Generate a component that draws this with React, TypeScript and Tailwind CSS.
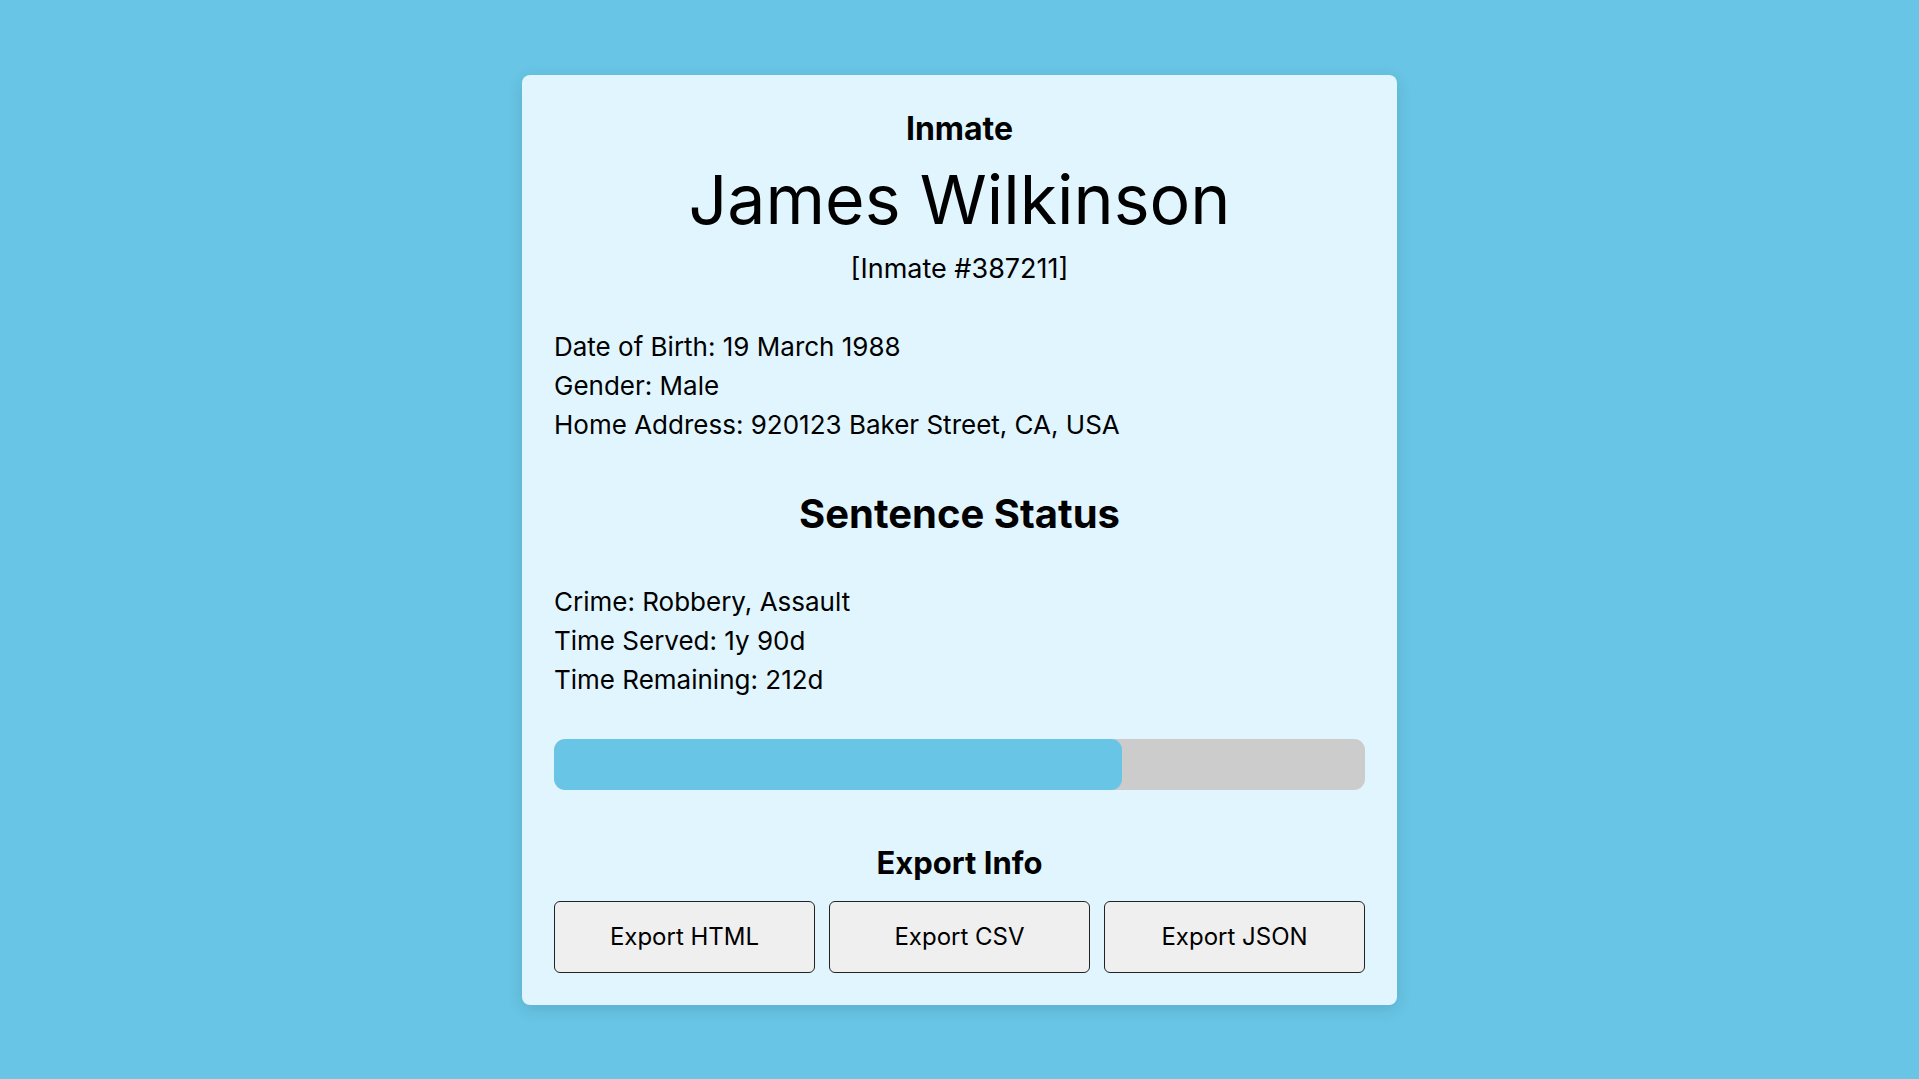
export default function App() {
  const served = 70;

  return (
    <div className="min-h-screen bg-[#68c5e5] flex justify-center pt-[75px] font-['Inter','Liberation_Sans',sans-serif] text-black">
      <div className="w-[875px] h-[930px] bg-[#e0f5fe] rounded-lg shadow-[0_4px_16px_rgba(0,0,0,0.12)] px-8 pt-[36px] pb-8 flex flex-col">
        {/* Header */}
        <div className="text-center text-[32px] leading-9 font-bold">Inmate</div>
        <div className="text-center text-[68px] leading-[72px] mt-4 font-normal">
          James Wilkinson
        </div>
        <div className="text-center text-[27px] leading-9 mt-[16px]">
          [Inmate #387211]
        </div>

        {/* Personal details */}
        <div className="mt-10 text-[26px] leading-[39px]">
          <div>Date of Birth: 19 March 1988</div>
          <div>Gender: Male</div>
          <div>Home Address: 920123 Baker Street, CA, USA</div>
        </div>

        {/* Sentence */}
        <div className="mt-[50px] text-center text-[40px] leading-10 font-bold">
          Sentence Status
        </div>
        <div className="mt-[48px] text-[26px] leading-[39px]">
          <div>Crime: Robbery, Assault</div>
          <div>Time Served: 1y 90d</div>
          <div>Time Remaining: 212d</div>
        </div>

        <div className="mt-[40px] h-[53px] w-full rounded-[11px] bg-[#cccccc] overflow-hidden">
          <div
            className="h-full rounded-[11px] bg-[#68c5e5]"
            style={{ width: `${served}%` }}
          />
        </div>

        {/* Export */}
        <div className="mt-[53px] text-center text-[31px] leading-10 font-bold">
          Export Info
        </div>
        <div className="mt-[18px] grid grid-cols-3 gap-[14px]">
          {["Export HTML", "Export CSV", "Export JSON"].map((label) => (
            <button
              key={label}
              className="h-[72px] bg-[#efefef] border border-[#222] rounded-md text-[24px]"
            >
              {label}
            </button>
          ))}
        </div>
      </div>
    </div>
  );
}
